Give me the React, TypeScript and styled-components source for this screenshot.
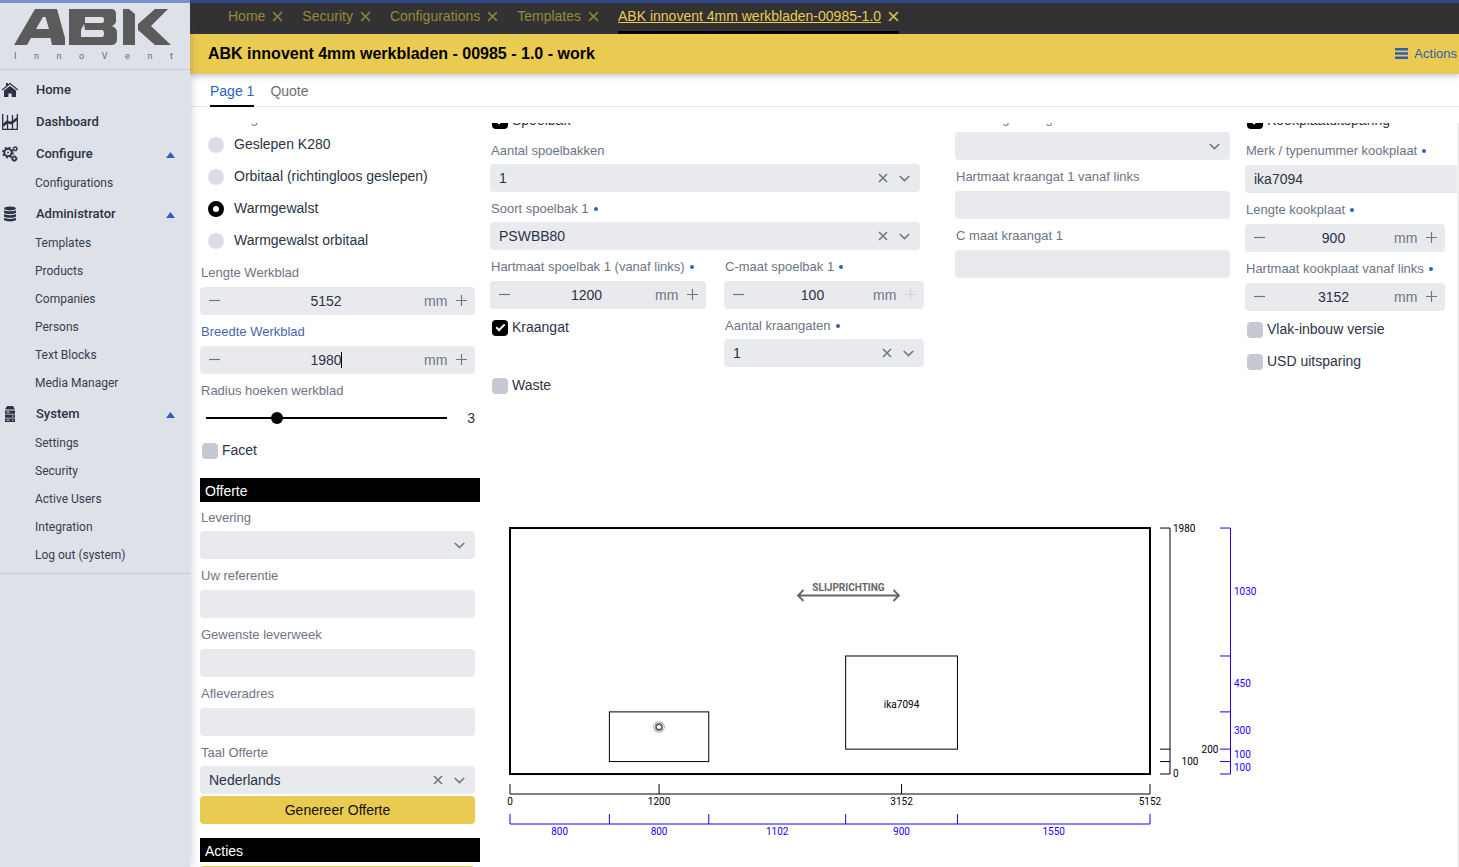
import React, { useId } from 'react';
import styled, { createGlobalStyle, css } from 'styled-components';

const GlobalStyle = createGlobalStyle`
  *, *::before, *::after { box-sizing: border-box; }
  html, body { margin: 0; padding: 0; background: #fff; }
  body { font-family: "Liberation Sans", Arial, sans-serif; font-size: 14px; color: #2b3348; }
  button, input, select { font: inherit; color: inherit; margin: 0; }
  ul { list-style: none; margin: 0; padding: 0; }
`;

const App = styled.div`
  display: grid;
  grid-template-columns: 190px minmax(0, 1fr);
  height: 100vh;
  overflow: hidden;
`;

/* ---------- sidebar ---------- */

const Sidebar = styled.aside`
  position: relative;
  z-index: 1;
  background: #dee2e8;
  border-top: 3px solid #7b90d1;
  box-shadow: 1px 0 8px rgba(50, 60, 110, 0.25);
  font-family: Roboto, sans-serif;
  color: #2b3244;
`;

const Brand = styled.div`
  height: 67px;
  padding: 6px 17px 0 14px;
  border-bottom: 1px solid #c6cad3;
`;

const BrandMark = styled.svg`
  display: block;
  width: 157px;
  height: 36px;
`;

const Tagline = styled.div`
  display: flex;
  justify-content: space-between;
  margin-top: 5px;
  font-size: 9px;
  line-height: 12px;
  color: #666a70;
`;

const Menu = styled.nav`
  padding: 4px 0 3px;
  border-bottom: 1px solid #c6cad3;
`;

const MenuHead = styled.a`
  display: flex;
  align-items: center;
  height: 32px;
  padding: 0 15px 0 2px;
  font-size: 13px;
  font-weight: 500;
  color: inherit;
  text-decoration: none;
  svg { width: 16px; height: 16px; flex: none; }
  span { flex: 1; margin-left: 18px; padding-bottom: 2px; }
  svg.arrow { width: 9px; height: 6px; margin-top: 1px; }
`;

const MenuItem = styled.a`
  display: block;
  height: 28px;
  padding-left: 35px;
  font-size: 12px;
  line-height: 26px;
  color: #363d50;
  text-decoration: none;
`;

/* ---------- header bars ---------- */

const Main = styled.main`
  display: flex;
  flex-direction: column;
  min-width: 0;
  min-height: 0;
`;

const OpenTabs = styled.nav`
  display: flex;
  gap: 19px;
  flex: none;
  height: 34px;
  padding-left: 38px;
  border-top: 3px solid #30468a;
  background: #323232;
`;

const OpenTab = styled.div<{ $active?: boolean }>`
  display: flex;
  align-items: center;
  gap: 7px;
  padding-bottom: 2px;
  border-bottom: 3px solid ${p => (p.$active ? '#000' : 'transparent')};
  color: ${p => (p.$active ? '#ebcb50' : '#9c873c')};
  a { color: inherit; text-decoration: ${p => (p.$active ? 'underline' : 'none')}; }
  svg { opacity: 0.85; }
`;

const IconButton = styled.button`
  display: flex;
  align-items: center;
  justify-content: center;
  flex: none;
  padding: 0;
  border: 0;
  background: none;
  color: inherit;
`;

const TitleBar = styled.header`
  display: flex;
  align-items: center;
  justify-content: space-between;
  flex: none;
  height: 40px;
  padding: 0 2px 0 18px;
  background: #eacb51;
  box-shadow: 0 1px 7px rgba(60, 70, 130, 0.4);
`;

const Title = styled.h1`
  margin: 0;
  font-size: 16px;
  color: #000;
`;

const ActionsButton = styled(IconButton)`
  gap: 6px;
  padding-bottom: 2px;
  font-size: 13px;
  color: #2e5fb4;
`;

const PageTabs = styled.nav`
  display: flex;
  gap: 16px;
  flex: none;
  height: 33px;
  padding-left: 20px;
  border-bottom: 1px solid #e4e6ea;
`;

const PageTab = styled.a<{ $active?: boolean }>`
  margin-bottom: -1px;
  line-height: 34px;
  border-bottom: 2px solid ${p => (p.$active ? '#000' : 'transparent')};
  color: ${p => (p.$active ? '#2b5fc4' : '#6c7076')};
  text-decoration: none;
`;

/* ---------- scrolled form ---------- */

const Scroller = styled.div`
  flex: 1;
  min-height: 0;
  margin-top: 16px;
  overflow: hidden;
  border-right: 2px solid #eeeef1;
`;

const Form = styled.form`
  display: grid;
  grid-template-columns: 280px minmax(0, 1fr);
  gap: 10px;
  margin-top: -19px;
  padding-left: 10px;
`;

const Narrow = styled.div`
  padding-right: 5px;
`;

const Columns = styled.div`
  display: grid;
  grid-template-columns: minmax(0, 450fr) minmax(0, 275fr) minmax(0, 212fr);
  gap: 15px;
  align-items: start;
`;

const Wide = styled.div`
  padding-right: 20px;
`;

const Pair = styled.div`
  display: grid;
  grid-template-columns: 216fr 200fr;
  column-gap: 18px;
  margin-right: -4px;
  align-items: start;
`;

const Compact = styled.div`
  padding-right: 12px;
`;

const Overflowing = styled.div`
  width: 275px;
`;

const Field = styled.div<{ $tight?: boolean }>`
  display: grid;
  row-gap: ${p => (p.$tight ? 5 : 6)}px;
  padding: 7px 0 2px;
`;

const labelText = css`
  font-size: 13px;
  line-height: 16px;
  color: #6d7486;
  white-space: nowrap;
`;

const Label = styled.label<{ $focused?: boolean }>`
  ${labelText}
  padding-left: 1px;
  color: ${p => (p.$focused ? '#4a67ab' : '#6d7486')};
`;

const Required = styled.span`
  display: inline-block;
  width: 4px;
  height: 4px;
  margin-left: 5px;
  border-radius: 50%;
  background: #2c60c6;
  vertical-align: 2px;
`;

const Box = styled.div`
  display: flex;
  align-items: center;
  height: 28px;
  border-radius: 4px;
  background: #e9eaee;
  color: #6f7687;
`;

const TextInput = styled.input`
  flex: 1;
  width: 100%;
  min-width: 0;
  height: 28px;
  padding: 0 9px;
  border: 0;
  outline: 0;
  background: none;
  color: #2b3348;
`;

const NumberInput = styled(TextInput)`
  padding: 0;
  text-align: center;
`;

const NumberSlot = styled.span`
  position: relative;
  display: flex;
  flex: 1;
  min-width: 0;
`;

const Caret = styled.span`
  position: absolute;
  top: 6px;
  left: calc(50% + 15px);
  width: 1px;
  height: 16px;
  background: #000;
`;

const Step = styled(IconButton)`
  width: 28px;
  height: 28px;
  padding-bottom: 2px;
  &:disabled { color: #d0d3da; }
`;

const Unit = styled.span`
  width: 23px;
`;

const SelectInput = styled.select`
  flex: 1;
  min-width: 0;
  height: 28px;
  padding: 0 9px;
  border: 0;
  outline: 0;
  appearance: none;
  background: none;
  color: #2b3348;
`;

const SelectIcons = styled.span`
  display: flex;
  align-items: center;
  gap: 11px;
  padding-right: 10px;
`;

const ChoiceRow = styled.label<{ $radio?: boolean }>`
  display: flex;
  align-items: center;
  height: 32px;
  gap: ${p => (p.$radio ? 10 : 4)}px;
  padding-left: ${p => (p.$radio ? 8 : 2)}px;
  white-space: nowrap;
`;

const Check = styled.input`
  display: grid;
  place-content: center;
  flex: none;
  width: 16px;
  height: 16px;
  margin-top: 2px;
  border-radius: 4px;
  background: #c5c9d3;
  appearance: none;
  &:checked { background: #000; }
  &:checked::before {
    content: '';
    width: 9px;
    height: 5px;
    margin-bottom: 3px;
    border: solid #fff;
    border-width: 0 0 2px 2px;
    transform: rotate(-45deg);
  }
`;

const Radio = styled.input`
  flex: none;
  width: 16px;
  height: 16px;
  margin-top: 2px;
  border-radius: 50%;
  background: #dadee4;
  appearance: none;
  &:checked { border: 5px solid #000; background: #fff; }
`;

const RadioGroup = styled.fieldset`
  margin: 0;
  padding: 0 0 2px;
  border: 0;
  legend {
    ${labelText}
    padding: 7px 0 0 1px;
    margin-bottom: 1px;
  }
`;

const SliderRow = styled.div`
  display: flex;
  align-items: center;
  justify-content: space-between;
  height: 28px;
  padding-left: 6px;
`;

const Slider = styled.input`
  width: 241px;
  height: 12px;
  appearance: none;
  background: linear-gradient(#000, #000) center / 100% 2px no-repeat;
  &::-webkit-slider-thumb {
    appearance: none;
    width: 12px;
    height: 12px;
    border-radius: 50%;
    background: #000;
  }
`;

const SectionTitle = styled.h2`
  height: 24px;
  margin: 12px -5px 1px 0;
  padding-left: 5px;
  background: #000;
  color: #fff;
  font-size: 14px;
  font-weight: 400;
  line-height: 26px;
`;

const PrimaryButton = styled.button`
  display: block;
  width: 100%;
  height: 28px;
  margin-bottom: 14px;
  border: 0;
  border-radius: 4px;
  background: #eacb51;
  color: #111;
`;

const SectionActions = styled.div`
  padding-top: 3px;
`;

const Drawing = styled.svg`
  display: block;
  width: 780px;
  max-width: 100%;
  height: auto;
  margin-top: 110px;
  font-family: Roboto, sans-serif;
  font-size: 10px;
`;

/* ---------- small icons ---------- */

const Cross = ({ size = 10 }: { size?: number }) => (
  <svg width={size} height={size} viewBox="0 0 10 10" stroke="currentColor" strokeWidth="1.6" fill="none">
    <path d="M1 1 9 9M9 1 1 9" />
  </svg>
);
const Chevron = () => (
  <svg width="11" height="7" viewBox="0 0 11 7" stroke="currentColor" strokeWidth="1.6" fill="none">
    <path d="M.8 1 5.5 5.6 10.2 1" />
  </svg>
);
const Minus = () => (
  <svg width="11" height="11" viewBox="0 0 11 11" stroke="currentColor" fill="none">
    <path d="M0 5.5H11" strokeWidth="1.2" />
  </svg>
);
const Plus = () => (
  <svg width="11" height="11" viewBox="0 0 11 11" stroke="currentColor" fill="none">
    <path d="M0 5.5H11M5.5 0V11" strokeWidth="1.2" />
  </svg>
);
const Arrow = () => (
  <svg className="arrow" viewBox="0 0 9 6" fill="#2d5ecb"><path d="M4.5 0 9 6H0z" /></svg>
);
const HomeIcon = () => (
  <svg viewBox="0 0 16 16" fill="currentColor">
    <path d="M4 1h2v2.2L4 5z" />
    <path d="M0 8 8 1.6 16 8" fill="none" stroke="currentColor" strokeWidth="1.3" />
    <path d="M2 8.6 8 3.9l6 4.7V15H9.6v-3.4H6.4V15H2z" />
  </svg>
);
const ChartIcon = () => (
  <svg viewBox="0 0 16 16" fill="none" stroke="currentColor">
    <path d="M.7 0v15.3H16M5.5 1v14M10.5 1v14M15.3 0v15" strokeWidth="1.3" />
    <path d="M1 11.500 5 8l4 1 6.500-4.500" strokeWidth="2.6" />
  </svg>
);
const GearsIcon = () => (
  <svg viewBox="0 0 16 16" fill="none" stroke="currentColor">
    <circle cx="6" cy="6.500" r="3.700" strokeWidth="2" />
    <circle cx="6" cy="6.500" r="5.100" strokeWidth="1.600" strokeDasharray="2 2.005" />
    <circle cx="6" cy="6.500" r=".9" fill="currentColor" stroke="none" />
    <circle cx="13.200" cy="2.800" r="1.600" strokeWidth="1.200" />
    <circle cx="13.200" cy="2.800" r="2.400" strokeWidth=".8" strokeDasharray="1 .885" />
    <circle cx="12.300" cy="12.600" r="1.900" strokeWidth="1.500" />
    <circle cx="12.300" cy="12.600" r="2.900" strokeWidth="1" strokeDasharray="1.200 1.078" />
  </svg>
);
const DatabaseIcon = () => (
  <svg viewBox="0 0 16 16" fill="currentColor">
    <ellipse cx="8" cy="2.4" rx="6" ry="2" />
    <path d="M2 4.2c2 1.5 10 1.5 12 0v2.5c-1.500 1.700-10.500 1.700-12 0zM2 8c2 1.500 10 1.500 12 0v2.500c-1.500 1.700-10.500 1.700-12 0zM2 11.800c2 1.500 10 1.500 12 0v2.300c-1.500 1.700-10.500 1.700-12 0z" />
  </svg>
);
const ServerIcon = () => (
  <svg viewBox="0 0 16 16" fill="currentColor">
    <path d="M5 0h6l2 3.600H3zM3 4.500h10v3.200H3zM3 8.500h10v3.200H3zM3 12.500h10V16H3z" />
    <path d="M4.500 6h3M4.500 14.200h3M10 10.100h1.500M10 14.200h1.500" stroke="#dee2e8" strokeWidth="1" />
  </svg>
);

/* ---------- form parts ---------- */

type FieldProps = { label: string; required?: boolean; value?: string };

const FieldLabel = ({ id, label, required, focused }: { id: string; label: string; required?: boolean; focused?: boolean }) => (
  <Label htmlFor={id} $focused={focused}>{label}{required && <Required />}</Label>
);

const TextField = ({ label, required, value = '' }: FieldProps) => {
  const id = useId();
  return (
    <Field>
      <FieldLabel id={id} label={label} required={required} />
      <Box><TextInput id={id} defaultValue={value} /></Box>
    </Field>
  );
};

const SelectField = ({ label, required, value = '' }: FieldProps) => {
  const id = useId();
  return (
    <Field $tight>
      <FieldLabel id={id} label={label} required={required} />
      <Box>
        <SelectInput id={id}><option>{value}</option></SelectInput>
        <SelectIcons>
          {value && <IconButton type="button" aria-label="Wissen"><Cross /></IconButton>}
          <Chevron />
        </SelectIcons>
      </Box>
    </Field>
  );
};

const NumberField = ({ label, required, value, focused, atMax }: FieldProps & { focused?: boolean; atMax?: boolean }) => {
  const id = useId();
  return (
    <Field>
      <FieldLabel id={id} label={label} required={required} focused={focused} />
      <Box>
        <Step type="button" aria-label="Minder"><Minus /></Step>
        <NumberSlot>
          <NumberInput id={id} defaultValue={value} inputMode="numeric" />
          {focused && <Caret />}
        </NumberSlot>
        <Unit>mm</Unit>
        <Step type="button" aria-label="Meer" disabled={atMax}><Plus /></Step>
      </Box>
    </Field>
  );
};

const CheckField = ({ label, checked }: { label: string; checked?: boolean }) => (
  <ChoiceRow><Check type="checkbox" defaultChecked={checked} />{label}</ChoiceRow>
);

/* ---------- worktop drawing ---------- */

const LENGTH = 5152;
const DEPTH = 1980;
const SCALE = 640 / LENGTH;
const px = (mm: number) => 20 + mm * SCALE;
const py = (mm: number) => 263 - mm * SCALE;
const BLUE = '#1a00ff';

const Worktop = () => {
  const xTicks = [0, 1200, 3152, LENGTH];
  const yTicks = [0, 100, 200, DEPTH];
  const xParts = [0, 800, 1600, 2702, 3602, LENGTH];
  const xSizes = [800, 800, 1102, 900, 1550];
  const yParts = [0, 100, 200, 500, 950, DEPTH];
  const ySizes = [100, 100, 300, 450, 1030];
  return (
    <Drawing viewBox="0 0 780 340" role="img" aria-label="Werkblad">
      <g fill="none" stroke="#000">
        <rect x={px(0)} y={py(DEPTH)} width="640" height="246" strokeWidth="2" />
        <rect x={px(800)} y={py(500)} width={800 * SCALE} height={400 * SCALE} />
        <rect x={px(2702)} y={py(950)} width={900 * SCALE} height={750 * SCALE} />
        <path d={`M${px(0)} 283H${px(LENGTH)}` + xTicks.map(t => `M${px(t)} 273V283`).join('')} />
        <path d={`M680 ${py(0)}V${py(DEPTH)}` + yTicks.map(t => `M670 ${py(t)}H680`).join('')} />
      </g>
      <g fill="none" stroke={BLUE}>
        <path d={`M${px(0)} 313H${px(LENGTH)}` + xParts.map(t => `M${px(t)} 303V313`).join('')} />
        <path d={`M740.5 ${py(0)}V${py(DEPTH)}` + yParts.map(t => `M730 ${py(t)}H740.5`).join('')} />
      </g>
      <g fill="none" stroke="#666">
        <circle cx="169" cy="216" r="5.300" stroke="#aaa" />
        <circle cx="169" cy="216" r="3" strokeWidth="1.800" />
        <path d="M165.500 212.500l2 2M172.500 212.500l-2 2M165.500 219.500l2-2M172.500 219.500l-2-2" />
      </g>
      <g fill="none" stroke="#666" strokeWidth="1.800">
        <path d="M308 84.500H409M313.500 79 308 84.500 313.500 90M403.500 79 409 84.500 403.500 90" />
      </g>
      <text x="358.500" y="80" textAnchor="middle" fontWeight="700" fill="#666">SLIJPRICHTING</text>
      <g fill="#000" textAnchor="middle">
        <text x={px(3152)} y="197">ika7094</text>
        {xTicks.map(t => <text key={t} x={px(t)} y="294">{t}</text>)}
        <text x="700" y="254">100</text>
        <text x="720" y="242">200</text>
      </g>
      <g fill="#000">
        <text x="683" y="21">1980</text>
        <text x="683" y="266">0</text>
      </g>
      <g fill={BLUE} textAnchor="middle">
        {xSizes.map((s, i) => <text key={i} x={(px(xParts[i]) + px(xParts[i + 1])) / 2} y="324">{s}</text>)}
      </g>
      <g fill={BLUE}>
        {ySizes.map((s, i) => <text key={i} x="744" y={(py(yParts[i]) + py(yParts[i + 1])) / 2 + 3}>{s}</text>)}
      </g>
    </Drawing>
  );
};

/* ---------- page data ---------- */

const menu = [
  { title: 'Home', icon: <HomeIcon /> },
  { title: 'Dashboard', icon: <ChartIcon /> },
  { title: 'Configure', icon: <GearsIcon />, items: ['Configurations'] },
  { title: 'Administrator', icon: <DatabaseIcon />, items: ['Templates', 'Products', 'Companies', 'Persons', 'Text Blocks', 'Media Manager'] },
  { title: 'System', icon: <ServerIcon />, items: ['Settings', 'Security', 'Active Users', 'Integration', 'Log out (system)'] },
];

const openTabs = ['Home', 'Security', 'Configurations', 'Templates', 'ABK innovent 4mm werkbladen-00985-1.0'];
const finishes = ['Geslepen K280', 'Orbitaal (richtingloos geslepen)', 'Warmgewalst', 'Warmgewalst orbitaal'];

export default function ConfiguratorPage() {
  return (
    <App>
      <GlobalStyle />
      <Sidebar>
        <Brand>
          <BrandMark viewBox="0 0 157 36" fill="#5b5b5b" fillRule="evenodd" role="img" aria-label="ABK">
            <path d="M0 36 21 0H43L51 29V36H38L36.500 29H17L13 36zM22 20H35L31.500 8H29z" />
            <path d="M55 0H97Q102 0 102 5V12Q102 15 98 17Q103 19 103 23V30Q103 36 97 36H55zM71 8 71 14H88Q90 14 90 11Q90 8 88 8zM70 15 67 21V28H88Q90 28 90 25Q90 21 88 21H71z" />
            <path d="M109 0H115L121 5V36H109zM124 15 141 0H154L137 17 157 36H141L124 21z" />
          </BrandMark>
          <Tagline>{[...'InnoVent'].map((c, i) => <span key={i}>{c}</span>)}</Tagline>
        </Brand>
        <Menu>
          <ul>
            {menu.map(group => (
              <li key={group.title}>
                <MenuHead href="#">{group.icon}<span>{group.title}</span>{group.items && <Arrow />}</MenuHead>
                {group.items && (
                  <ul>{group.items.map(item => <li key={item}><MenuItem href="#">{item}</MenuItem></li>)}</ul>
                )}
              </li>
            ))}
          </ul>
        </Menu>
      </Sidebar>
      <Main>
        <OpenTabs>
          {openTabs.map((tab, i) => (
            <OpenTab key={tab} $active={i === 4}>
              <a href="#">{tab}</a>
              <IconButton type="button" aria-label="Sluiten"><Cross size={11} /></IconButton>
            </OpenTab>
          ))}
        </OpenTabs>
        <TitleBar>
          <Title>ABK innovent 4mm werkbladen - 00985 - 1.0 - work</Title>
          <ActionsButton type="button">
            <svg width="13" height="11" viewBox="0 0 13 11" fill="currentColor"><path d="M0 0h13v2.500H0zM0 4.200h13v2.500H0zM0 8.400h13v2.500H0z" /></svg>
            Actions
          </ActionsButton>
        </TitleBar>
        <PageTabs>
          <PageTab href="#" $active>Page 1</PageTab>
          <PageTab href="#">Quote</PageTab>
        </PageTabs>
        <Scroller>
          <Form>
            <Narrow>
              <RadioGroup>
                <legend>Afwerking</legend>
                {finishes.map(f => (
                  <ChoiceRow key={f} $radio>
                    <Radio type="radio" name="finish" defaultChecked={f === 'Warmgewalst'} />{f}
                  </ChoiceRow>
                ))}
              </RadioGroup>
              <NumberField label="Lengte Werkblad" value="5152" />
              <NumberField label="Breedte Werkblad" value="1980" focused />
              <Field $tight>
                <Label htmlFor="radius">Radius hoeken werkblad</Label>
                <SliderRow>
                  <Slider id="radius" type="range" min="1" max="8" defaultValue="3" />
                  <output htmlFor="radius">3</output>
                </SliderRow>
              </Field>
              <CheckField label="Facet" />
              <SectionTitle>Offerte</SectionTitle>
              <SelectField label="Levering" />
              <TextField label="Uw referentie" />
              <TextField label="Gewenste leverweek" />
              <TextField label="Afleveradres" />
              <SelectField label="Taal Offerte" value="Nederlands" />
              <PrimaryButton type="button">Genereer Offerte</PrimaryButton>
              <SectionTitle>Acties</SectionTitle>
              <SectionActions><PrimaryButton type="button" aria-label="Actie" /></SectionActions>
            </Narrow>
            <div>
              <Columns>
                <Wide>
                  <CheckField label="Spoelbak" checked />
                  <SelectField label="Aantal spoelbakken" value="1" />
                  <SelectField label="Soort spoelbak 1" required value="PSWBB80" />
                  <Pair>
                    <NumberField label="Hartmaat spoelbak 1 (vanaf links)" required value="1200" />
                    <NumberField label="C-maat spoelbak 1" required value="100" atMax />
                    <CheckField label="Kraangat" checked />
                    <SelectField label="Aantal kraangaten" required value="1" />
                  </Pair>
                  <CheckField label="Waste" />
                </Wide>
                <div>
                  <SelectField label="Plaatsing kraangat" />
                  <TextField label="Hartmaat kraangat 1 vanaf links" />
                  <TextField label="C maat kraangat 1" />
                </div>
                <Compact>
                  <CheckField label="Kookplaatuitsparing" checked />
                  <Overflowing>
                    <TextField label="Merk / typenummer kookplaat" required value="ika7094" />
                  </Overflowing>
                  <NumberField label="Lengte kookplaat" required value="900" />
                  <NumberField label="Hartmaat kookplaat vanaf links" required value="3152" />
                  <CheckField label="Vlak-inbouw versie" />
                  <CheckField label="USD uitsparing" />
                </Compact>
              </Columns>
              <Worktop />
            </div>
          </Form>
        </Scroller>
      </Main>
    </App>
  );
}
